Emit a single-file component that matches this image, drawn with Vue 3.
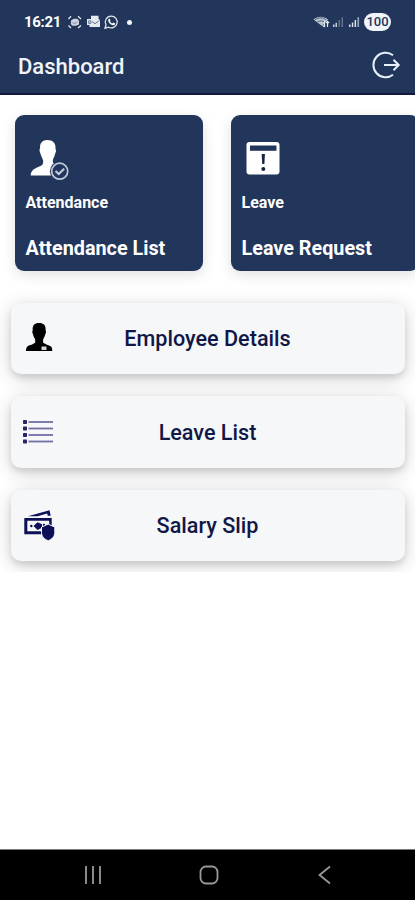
<template>
  <div class="screen">
    <header class="top">
      <div class="status">
        <span class="time">16:21</span>
        <svg class="notif" width="56" height="16" viewBox="0 0 56 16">
          <g fill="none" stroke="#dfe5ee" stroke-width="1.3">
            <path d="M1.500 5 4 2.300M11 2.300 14 5M1.500 11.500 4 14M14 11.500 11 14" />
            <path d="M44.200 2.100a5.900 5.900 0 1 1-2.700 11.100l-3.500 1 1-3.400a5.900 5.900 0 0 1 5.200-8.700z" />
          </g>
          <path d="M4 6.500 6.800 4.800h3.400L12 6.500v4l-3 1.200H5.300L3.800 10z" fill="#cbd3df" />
          <path d="M5.500 8.800c1.500 1 3.500.6 4.800-1.300" fill="none" stroke="#7f8ca3" />
          <path d="M24 1.800h7.500v3L33 6v7H22.500v-2H20V5h4z" fill="#e5eaf1" />
          <path d="M25 7.500 28 9.700 32.500 6.500M21.700 6.800h2.200v2.600h-2.200z" fill="none" stroke="#65748e" />
          <path d="M41.700 5.100c.8-.8 1.400 0 1.800 1.200l-.6.9c.7 1.200 1.400 1.800 2.500 2.300l.8-.9 2 1c-.3 2.400-2.700 1.800-4.600.6-2-1.300-3.200-3.700-1.900-5.100z" fill="#fff" />
        </svg>
        <span class="dot"></span>
        <div class="signals">
          <svg width="50" height="14" viewBox="0 0 50 14">
            <path d="M.5 4.500C5 .8 10.500.8 15 4.500L9 11z" fill="#b9c4d1" />
            <path d="M2 4.800c4-2.600 8-2.600 11 0M4.500 7c2.500-1.500 5-1.500 7 0" fill="none" stroke="#50617d" />
            <path d="M11.500 6v6M9.800 10.300l1.700 1.900M14.500 12V6.500m-1.500 1.500 1.500-1.700L16 8" fill="none" stroke="#e3e9ef" stroke-width="1.200" />
            <path d="M20 9.500h1.500V12H20zM22.500 7.800H24V12h-1.500z" fill="#c5ced9" />
            <path d="M25.500 5H27v7h-1.500zM28.500 2.200H30V12h-1.500z" fill="#63728d" />
            <path d="M36 9.500h1.500V12H36zM38.800 7.500h1.500V12h-1.500zM41.600 5h1.500v7h-1.500z" fill="#dce3eb" />
            <path d="M44.400 2.200h1.700V12h-1.700z" fill="#9ba7b8" />
          </svg>
          <span class="battery">100</span>
        </div>
      </div>
      <div class="appbar">
        <h1>Dashboard</h1>
        <svg class="logout" width="30" height="30" viewBox="0 0 30 30" fill="none" stroke="#e6f1fa" stroke-width="2">
          <path d="M21 4.300A12.200 12.200 0 1 0 21 23.700M12 14H27M21.500 8.800 26.700 14l-5.200 5.200" />
        </svg>
      </div>
    </header>

    <main class="content">
      <div class="tiles">
        <div v-for="tile in tiles" :key="tile.title" class="tile">
          <svg v-if="tile.icon === 'attendance'" width="44" height="44" viewBox="0 0 44 44">
            <path d="M22.300 3c5.500 0 8.700 3.300 8.200 8.800l.6 2.200-1.100 3.300c-.6 3-2 4.300-2.200 6.200-.2 3.200 2.200 4 4.700 5.500L28 38.500H5.700c0-5.500 4.300-7 9.300-9.200 2.300-1 3.300-2 3.200-5.200-.2-2.400-2-4.200-2.800-7.600l-1-3.200.7-2.500c-.3-4.700 2.300-7.800 7.200-7.800z" fill="#fff" />
            <circle cx="34.700" cy="34.200" r="9.800" fill="#22365b" />
            <circle cx="34.700" cy="34.200" r="8" fill="none" stroke="#c1cada" stroke-width="1.700" />
            <path d="m30.500 34 3.200 3 5.500-5.200" fill="none" stroke="#c1cada" stroke-width="2.200" />
          </svg>
          <svg v-else width="44" height="44" viewBox="0 0 44 44">
            <rect x="5.500" y="5" width="33" height="32.500" rx="3" fill="#fff" />
            <path d="M9 8.500h26.500v5.300H9z" fill="#22365b" />
            <path d="M20.700 17h3.200l-.5 10h-2.200z" fill="#18233d" />
            <circle cx="22.300" cy="32" r="2" fill="#18233d" />
          </svg>
          <span class="label">{{ tile.label }}</span>
          <span class="title">{{ tile.title }}</span>
        </div>
      </div>

      <div class="rows">
        <div v-for="row in rows" :key="row.title" class="row">
          <svg v-if="row.icon === 'person'" width="32" height="32" viewBox="0 0 32 32">
            <path d="M16 1c4.700 0 7 2.500 6.600 7.200l.5 1.700-1 3c-.5 2-1.500 3-2 4.600v3c2 2 7.500 3 8.400 4.600.6 1.200.8 2.500.8 3.900H3c0-1.400 0-2.900 1-4.100 1.100-1.600 6.400-2.300 8.200-4.400v-3.200c-.6-1.200-1.500-2.300-2-4.400l-1-2.800.5-1.900C9.300 3.500 11.500 1 16 1z" fill="#000" />
            <path d="M18.500 24.500h5v3.500h-5z" fill="#d6d6d6" />
          </svg>
          <svg v-else-if="row.icon === 'list'" width="32" height="32" viewBox="0 0 32 32">
            <g v-for="y in [6, 12.5, 19, 25.5]" :key="y">
              <rect x="0" :y="y - 2" width="4" height="4" rx=".7" fill="#252567" />
              <rect x="5.500" :y="y - .9" width="24.500" height="1.800" fill="#706fa2" />
            </g>
          </svg>
          <svg v-else width="32" height="32" viewBox="0 0 32 32" fill="#0b1057">
            <path d="M5 7.300 26.500 1.300l1.200 5.500h-3l-.5-2.300-9.700 2.800z" />
            <path fill-rule="evenodd" d="M1.300 9h27.400v8h-2.500v-5.200H4.300v10.500h14v3h-17z" />
            <path d="m10.500 17 4-3.700 4.500 2v3.500L14.500 21z" />
            <circle cx="8.300" cy="17" r="1.200" />
            <circle cx="21" cy="16" r="1.200" />
            <path d="m25.200 15.100 6.600 3v5.200c0 4.200-3 7.100-6.600 8.400-3.700-1.300-6.700-4.200-6.700-8.400v-5.200z" stroke="#f5f7f9" stroke-width="1" />
          </svg>
          <span class="name">{{ row.title }}</span>
        </div>
      </div>
    </main>

    <nav class="navbar">
      <svg width="22" height="22" viewBox="0 0 22 22">
        <path d="M4 2v18M11 2v18M18 2v18" />
      </svg>
      <svg width="22" height="22" viewBox="0 0 22 22">
        <rect x="2.500" y="2.500" width="17" height="17" rx="5.500" />
      </svg>
      <svg width="22" height="22" viewBox="0 0 22 22">
        <path d="M16 2.500 5.500 11 16 19.500" />
      </svg>
    </nav>
  </div>
</template>

<script setup>
const tiles = [
  { icon: 'attendance', label: 'Attendance', title: 'Attendance List' },
  { icon: 'leave', label: 'Leave', title: 'Leave Request' }
]

const rows = [
  { icon: 'person', title: 'Employee Details' },
  { icon: 'list', title: 'Leave List' },
  { icon: 'salary', title: 'Salary Slip' }
]
</script>

<style>
body {
  margin: 0;
  background: #fff;
}
</style>

<style scoped>
.screen {
  width: 415px;
  height: 900px;
  display: flex;
  flex-direction: column;
  overflow: hidden;
  background: #fff;
  font-family: Roboto, sans-serif;
}

.top {
  height: 95px;
  flex: none;
  box-sizing: border-box;
  background: #22365b;
  border-bottom: 2px solid #101a3c;
}

.status {
  height: 44px;
  display: flex;
  align-items: center;
  padding: 0 24px;
}

.time {
  width: 38px;
  color: #fff;
  font-size: 15px;
  font-weight: 700;
  letter-spacing: -0.3px;
}

.notif {
  margin-left: 5px;
}

.dot {
  width: 5px;
  height: 5px;
  margin-left: 4px;
  border-radius: 50%;
  background: #f0f3f7;
}

.signals {
  display: flex;
  align-items: center;
  gap: 1px;
  margin-left: auto;
}

.battery {
  width: 27px;
  height: 18px;
  border-radius: 9px;
  background: #f1f4f8;
  color: #22365b;
  font-size: 13px;
  font-weight: 500;
  line-height: 18px;
  text-align: center;
}

.appbar {
  height: 44px;
  display: flex;
  align-items: center;
  justify-content: space-between;
  padding: 0 13px 0 18px;
}

h1 {
  margin: 0;
  color: #f0f4f9;
  font-size: 22px;
  font-weight: 500;
}

.content {
  height: 477px;
  flex: none;
  overflow: hidden;
}

.tiles {
  display: flex;
  gap: 28px;
  padding: 20px 0 0 14.5px;
}

.tile {
  width: 188px;
  height: 156px;
  flex: none;
  box-sizing: border-box;
  display: flex;
  flex-direction: column;
  padding: 22px 10px 0 11px;
  border-radius: 9px;
  background: #22365b;
  color: #fff;
  font-weight: 700;
  box-shadow: 0 4px 14px rgba(0, 0, 0, 0.12);
}

.tile svg {
  margin-left: -1px;
}

.label {
  margin-top: 11px;
  font-size: 16px;
  line-height: 22px;
}

.title {
  margin-top: 22px;
  font-size: 19.8px;
  line-height: 26px;
}

.rows {
  display: flex;
  flex-direction: column;
  gap: 22px;
  padding: 31.5px 10px 0 11px;
}

.row {
  height: 71.5px;
  flex: none;
  display: flex;
  align-items: center;
  padding: 0 12px;
  border-radius: 10px;
  background: #f5f7f9;
  box-shadow: 0 4px 6px rgba(0, 0, 0, 0.1), 0 4px 20px rgba(0, 0, 0, 0.18);
}

.name {
  flex: 1;
  margin-right: 33px;
  padding-top: 1px;
  color: #111747;
  font-size: 21.6px;
  font-weight: 500;
  text-align: center;
}

.navbar {
  height: 51px;
  box-sizing: border-box;
  display: flex;
  align-items: center;
  justify-content: space-between;
  margin-top: auto;
  padding: 0 79px 0 82px;
  border-top: 1px solid #777;
  background: #000;
}

.navbar svg {
  fill: none;
  stroke: #999;
  stroke-width: 1.8;
}
</style>
